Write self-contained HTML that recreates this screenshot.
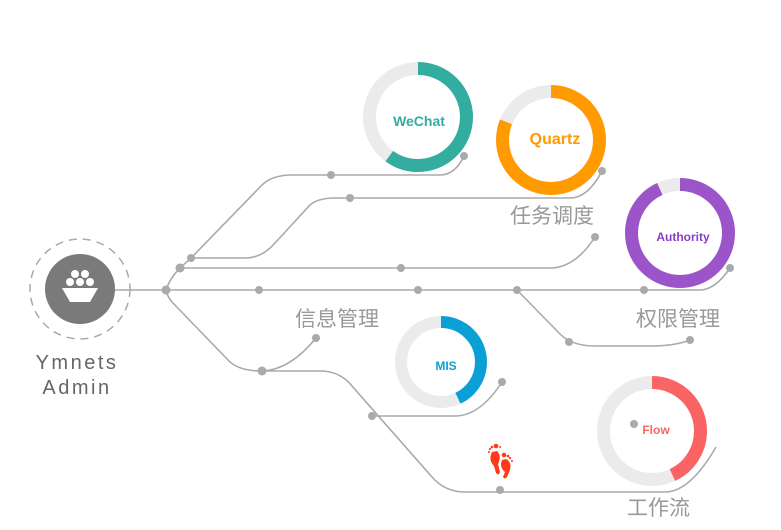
<!DOCTYPE html>
<html><head><meta charset="utf-8"><style>
html,body{margin:0;padding:0;background:#fff;width:781px;height:530px;overflow:hidden}
svg{display:block}
.t{font-family:"Liberation Sans","Noto Sans CJK SC",sans-serif;}
</style></head><body>
<svg width="781" height="530" viewBox="0 0 781 530" xmlns="http://www.w3.org/2000/svg">
<g fill="none" stroke="#aaa" stroke-width="1.6">
<path d="M115 290 H700 Q715 290 730 268"/>
<path d="M166 290 Q170 278 180 268 H550 Q575 268 595 237"/>
<path d="M180 268 L191 258 H245 Q262 258 275 243 L310 205 Q318 198 335 198 H570 Q588 198 602 171"/>
<path d="M191 258 L262 185 Q272 175 292 175 H440 Q455 175 464 156"/>
<path d="M166 290 Q167 296 172 302 L228 360 Q238 371 262 371 Q290 370 316 338"/>
<path d="M262 371 H320 Q340 371 352 386 L432 477 Q445 492 465 492 H665 Q690 492 716 447"/>
<path d="M372 416 H455 Q480 416 502 382"/>
<path d="M517 290 L560 334 Q572 346 595 346 H650 Q675 346 690 340"/>
</g>
<g fill="#aaa">
<circle cx="166" cy="290" r="4.5"/><circle cx="180" cy="268" r="4.5"/><circle cx="191" cy="258" r="4"/>
<circle cx="259" cy="290" r="4"/><circle cx="418" cy="290" r="4"/><circle cx="517" cy="290" r="4"/><circle cx="644" cy="290" r="4"/>
<circle cx="401" cy="268" r="4"/><circle cx="350" cy="198" r="4"/><circle cx="331" cy="175" r="4"/>
<circle cx="464" cy="156" r="4"/><circle cx="602" cy="171" r="4"/><circle cx="595" cy="237" r="4"/><circle cx="730" cy="268" r="4"/>
<circle cx="262" cy="371" r="4.5"/><circle cx="316" cy="338" r="4"/><circle cx="372" cy="416" r="4"/><circle cx="502" cy="382" r="4"/>
<circle cx="569" cy="342" r="4"/><circle cx="690" cy="340" r="4"/><circle cx="500" cy="490" r="4"/>
</g>
<circle cx="80" cy="289" r="50" fill="none" stroke="#aaa" stroke-width="1.5" stroke-dasharray="8 6"/>
<circle cx="80" cy="289" r="35" fill="#7a7a7a"/>
<g fill="#fff">
<circle cx="75" cy="274" r="4"/><circle cx="85" cy="274" r="4"/>
<circle cx="70" cy="282" r="4"/><circle cx="80" cy="282" r="4"/><circle cx="90" cy="282" r="4"/>
<path d="M62 288 H98 L90 302 H70 Z"/>
</g>
<text class="t" x="77" y="369" text-anchor="middle" font-size="20" fill="#666" letter-spacing="2.5">Ymnets</text>
<text class="t" x="77" y="394" text-anchor="middle" font-size="20" fill="#666" letter-spacing="2.5">Admin</text>
<g fill="none" stroke-width="13">
<circle cx="418" cy="117" r="48.5" stroke="#ebebeb"/>
<circle cx="418" cy="117" r="48.5" stroke="#33ad9f" stroke-dasharray="182.8 400" transform="rotate(-90 418 117)"/>
<circle cx="551" cy="140" r="48.5" stroke="#ebebeb"/>
<circle cx="551" cy="140" r="48.5" stroke="#ff9a00" stroke-dasharray="246.8 400" transform="rotate(-90 551 140)"/>
<circle cx="680" cy="233" r="48.5" stroke="#ebebeb"/>
<circle cx="680" cy="233" r="48.5" stroke="#9b55c8" stroke-dasharray="283.4 400" transform="rotate(-90 680 233)"/>
<circle cx="652" cy="431" r="48.5" stroke="#ebebeb"/>
<circle cx="652" cy="431" r="48.5" stroke="#fb6464" stroke-dasharray="131 400" transform="rotate(-90 652 431)"/>
</g>
<g fill="none" stroke-width="12">
<circle cx="441" cy="362" r="40" stroke="#ebebeb"/>
<circle cx="441" cy="362" r="40" stroke="#0aa0d6" stroke-dasharray="108 400" transform="rotate(-90 441 362)"/>
</g>
<circle cx="634" cy="424" r="4" fill="#aaa"/>
<g class="t" font-weight="bold" text-anchor="middle">
<text x="419" y="126" font-size="14" fill="#33ad9f">WeChat</text>
<text x="555" y="144" font-size="16" fill="#ff9a00">Quartz</text>
<text x="683" y="241" font-size="12" fill="#8a3fc0">Authority</text>
<text x="446" y="370" font-size="12" fill="#0aa0d6">MIS</text>
<text x="656" y="434" font-size="12" fill="#fb6464">Flow</text>
</g>
<g class="t" font-size="21" fill="#999">
<text x="510" y="223">任务调度</text>
<text x="295" y="326">信息管理</text>
<text x="636" y="326">权限管理</text>
<text x="627" y="515">工作流</text>
</g>
<g fill="#ff3a1a">
<path d="M492 452 Q488 460 494 466 L496 473 Q499 476 500 472 L498 464 Q502 456 497 451 Z"/>
<circle cx="496" cy="446" r="2.3"/><circle cx="492" cy="447" r="1.3"/><circle cx="490" cy="449" r="1.1"/><circle cx="489" cy="452" r="1"/><circle cx="500" cy="447" r="1"/>
<path d="M502 460 Q499 467 505 472 L503 477 Q505 480 507 477 L510 470 Q512 462 506 459 Z"/>
<circle cx="504" cy="455" r="2.3"/><circle cx="508" cy="456" r="1.3"/><circle cx="510" cy="458" r="1.1"/><circle cx="512" cy="461" r="1"/>
</g>
</svg>
</body></html>
